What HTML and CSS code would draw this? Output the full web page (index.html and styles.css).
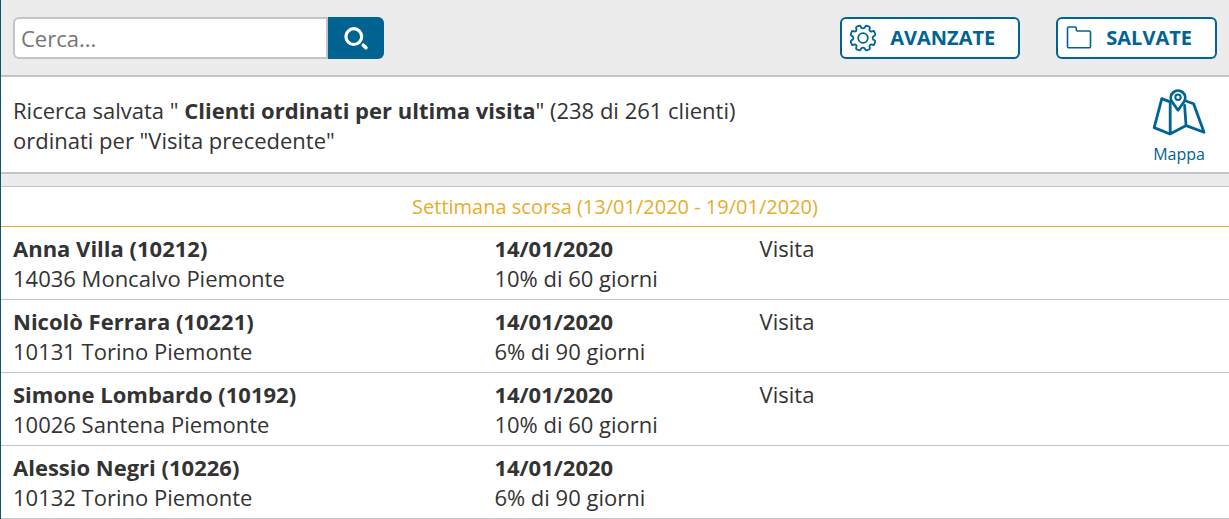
FILE: index.html
```html
<!DOCTYPE html>
<html lang="it">
<head>
<meta charset="utf-8">
<meta name="viewport" content="width=device-width, initial-scale=1">
<title>Clienti</title>
<link rel="stylesheet" href="styles.css">
</head>
<body>
<main class="page">
  <header class="toolbar">
    <form class="search" role="search">
      <input class="search-input" type="search" placeholder="Cerca..." aria-label="Cerca">
      <button class="search-button" type="button" aria-label="Avvia ricerca">
        <svg width="28" height="28" viewBox="0 0 28 28" fill="none" stroke="currentColor" aria-hidden="true">
          <circle cx="11.800" cy="12.600" r="7.900" stroke-width="3.200"/>
          <path d="M21.300 21.200l2.600 2.500" stroke-width="3.600" stroke-linecap="round"/>
        </svg>
      </button>
    </form>
    <div class="actions">
      <button class="action" type="button">
        <svg width="28" height="28" viewBox="-14 -14 28 28" fill="none" stroke="currentColor" stroke-width="1.800" stroke-linejoin="round" aria-hidden="true">
          <path d="M10.200 1.600L11.600 2.300Q12.600 2.900 12.200 3.900L11.300 6.300Q10.900 7.200 9.900 6.900L8.200 6.400Q6.700 6.700 6.400 8.200L6.900 9.900Q7.200 10.900 6.300 11.300L3.900 12.200Q2.900 12.600 2.300 11.600L1.600 10.200Q0 9-1.600 10.200L-2.300 11.600Q-2.900 12.600-3.900 12.200L-6.300 11.300Q-7.200 10.900-6.900 9.900L-6.400 8.200Q-6.700 6.700-8.200 6.400L-9.900 6.900Q-10.900 7.200-11.300 6.300L-12.200 3.900Q-12.600 2.900-11.600 2.300L-10.200 1.600Q-9 0-10.200-1.600L-11.600-2.300Q-12.600-2.900-12.200-3.900L-11.300-6.300Q-10.900-7.200-9.900-6.900L-8.200-6.400Q-6.700-6.700-6.400-8.200L-6.900-9.900Q-7.200-10.900-6.300-11.300L-3.900-12.200Q-2.900-12.600-2.300-11.600L-1.600-10.200Q0-9 1.600-10.200L2.300-11.600Q2.900-12.600 3.900-12.200L6.300-11.300Q7.200-10.900 6.900-9.900L6.400-8.200Q6.700-6.700 8.200-6.400L9.900-6.900Q10.900-7.200 11.300-6.300L12.200-3.900Q12.600-2.900 11.600-2.300L10.200-1.600Q9 0 10.200 1.600Z"/>
          <circle r="4.800"/>
        </svg>
        <span>AVANZATE</span>
      </button>
      <button class="action" type="button">
        <svg width="28" height="28" viewBox="0 0 28 28" fill="none" stroke="currentColor" stroke-width="1.600" stroke-linejoin="round" aria-hidden="true">
          <path d="M2.500 4.300Q2.500 3 3.800 3H10Q11.300 3 11.300 4.300V5.800Q11.300 7 12.500 7H24.100Q25.500 7 25.500 8.400V22.400Q25.500 23.800 24.100 23.800H3.900Q2.500 23.800 2.500 22.400Z"/>
        </svg>
        <span>SALVATE</span>
      </button>
    </div>
  </header>

  <section class="summary">
    <p class="summary-text">Ricerca salvata " <strong>Clienti ordinati per ultima visita</strong>" (238 di 261 clienti)<br>ordinati per "Visita precedente"</p>
    <a class="map-link" href="#mappa">
      <svg width="54" height="50" viewBox="0 0 54 50" fill="none" stroke="currentColor" stroke-width="2.800" stroke-linejoin="round" stroke-linecap="round" aria-hidden="true">
        <path d="M16.800 14.400L9.800 11.600L2.200 40.600L18 47L34.200 38.600L52 45.200L41.600 16.800L34.500 14.200M18.200 46V15M34 38L32.600 18.500"/>
        <path d="M26 23.200L20 14.800A7.200 7.200 0 1 1 32 14.800Z"/>
        <circle cx="26" cy="10.300" r="2.700" stroke-width="2"/>
      </svg>
      <span>Mappa</span>
    </a>
  </section>

  <table class="clients">
    <caption class="group-title">Settimana scorsa (13/01/2020 - 19/01/2020)</caption>
    <colgroup><col class="col-client"><col class="col-date"><col></colgroup>
    <tbody>
      <tr><td><strong>Anna Villa (10212)</strong><br>14036 Moncalvo Piemonte</td><td><strong>14/01/2020</strong><br>10% di 60 giorni</td><td>Visita</td></tr>
      <tr><td><strong>Nicolò Ferrara (10221)</strong><br>10131 Torino Piemonte</td><td><strong>14/01/2020</strong><br>6% di 90 giorni</td><td>Visita</td></tr>
      <tr><td><strong>Simone Lombardo (10192)</strong><br>10026 Santena Piemonte</td><td><strong>14/01/2020</strong><br>10% di 60 giorni</td><td>Visita</td></tr>
      <tr><td><strong>Alessio Negri (10226)</strong><br>10132 Torino Piemonte</td><td><strong>14/01/2020</strong><br>6% di 90 giorni</td><td></td></tr>
    </tbody>
  </table>
</main>
</body>
</html>
```
FILE: styles.css
```css
:root {
  --blue: #006391;
  --line: #c0c5c9;
  --gold: #e6ae2b;
}

* {
  box-sizing: border-box;
}

body {
  margin: 0;
  background: #ececec;
  color: #333;
  font-family: "Open Sans", "Noto Sans", sans-serif;
  font-size: 22px;
  line-height: 30px;
}

.page {
  border-left: 1px solid #0f5372;
}

.toolbar {
  display: flex;
  align-items: center;
  justify-content: space-between;
  gap: 36px;
  padding: 17px 12px 16px;
  border-bottom: 2px solid var(--line);
}

.search {
  display: flex;
  flex: 0 1 371px;
  height: 42px;
}

.search-input {
  flex: 1;
  min-width: 0;
  margin: 0;
  padding: 0 6px;
  border: 2px solid var(--line);
  border-radius: 6px 0 0 6px;
  background: #fff;
  color: #333;
  font: inherit;
  appearance: none;
}

.search-input::placeholder {
  color: #757575;
}

.search-button {
  display: flex;
  align-items: center;
  justify-content: center;
  width: 56px;
  padding: 0;
  border: 0;
  border-radius: 0 6px 6px 0;
  background: var(--blue);
  color: #fff;
}

.actions {
  display: flex;
  gap: 36px;
}

.action {
  display: flex;
  align-items: center;
  gap: 13px;
  height: 42px;
  padding: 0 23px 0 7px;
  border: 2px solid var(--blue);
  border-radius: 6px;
  background: #fff;
  color: var(--blue);
  font: inherit;
  font-size: 20px;
  font-weight: 700;
}

.summary {
  display: flex;
  align-items: flex-start;
  justify-content: space-between;
  gap: 24px;
  padding: 10px 23px 6px 12px;
  border-bottom: 2px solid var(--line);
  background: #fff;
}

.summary-text {
  margin: 8px 0 0;
}

.map-link {
  display: flex;
  flex-direction: column;
  align-items: center;
  gap: 6px;
  color: var(--blue);
  font-size: 16px;
  line-height: 23px;
  text-decoration: none;
}

.clients {
  width: 100%;
  margin-top: 12px;
  border-collapse: separate;
  border-spacing: 0;
  table-layout: fixed;
  background: #fff;
}

.group-title {
  padding: 5px 12px 4px;
  border-top: 1px solid var(--line);
  border-bottom: 1px solid var(--gold);
  background: #fff;
  color: var(--gold);
  font-size: 20px;
}

.col-client {
  width: 39.2%;
}

.col-date {
  width: 21.6%;
}

.clients td {
  padding: 6px 12px;
  border-bottom: 1px solid var(--line);
  vertical-align: top;
}
```
